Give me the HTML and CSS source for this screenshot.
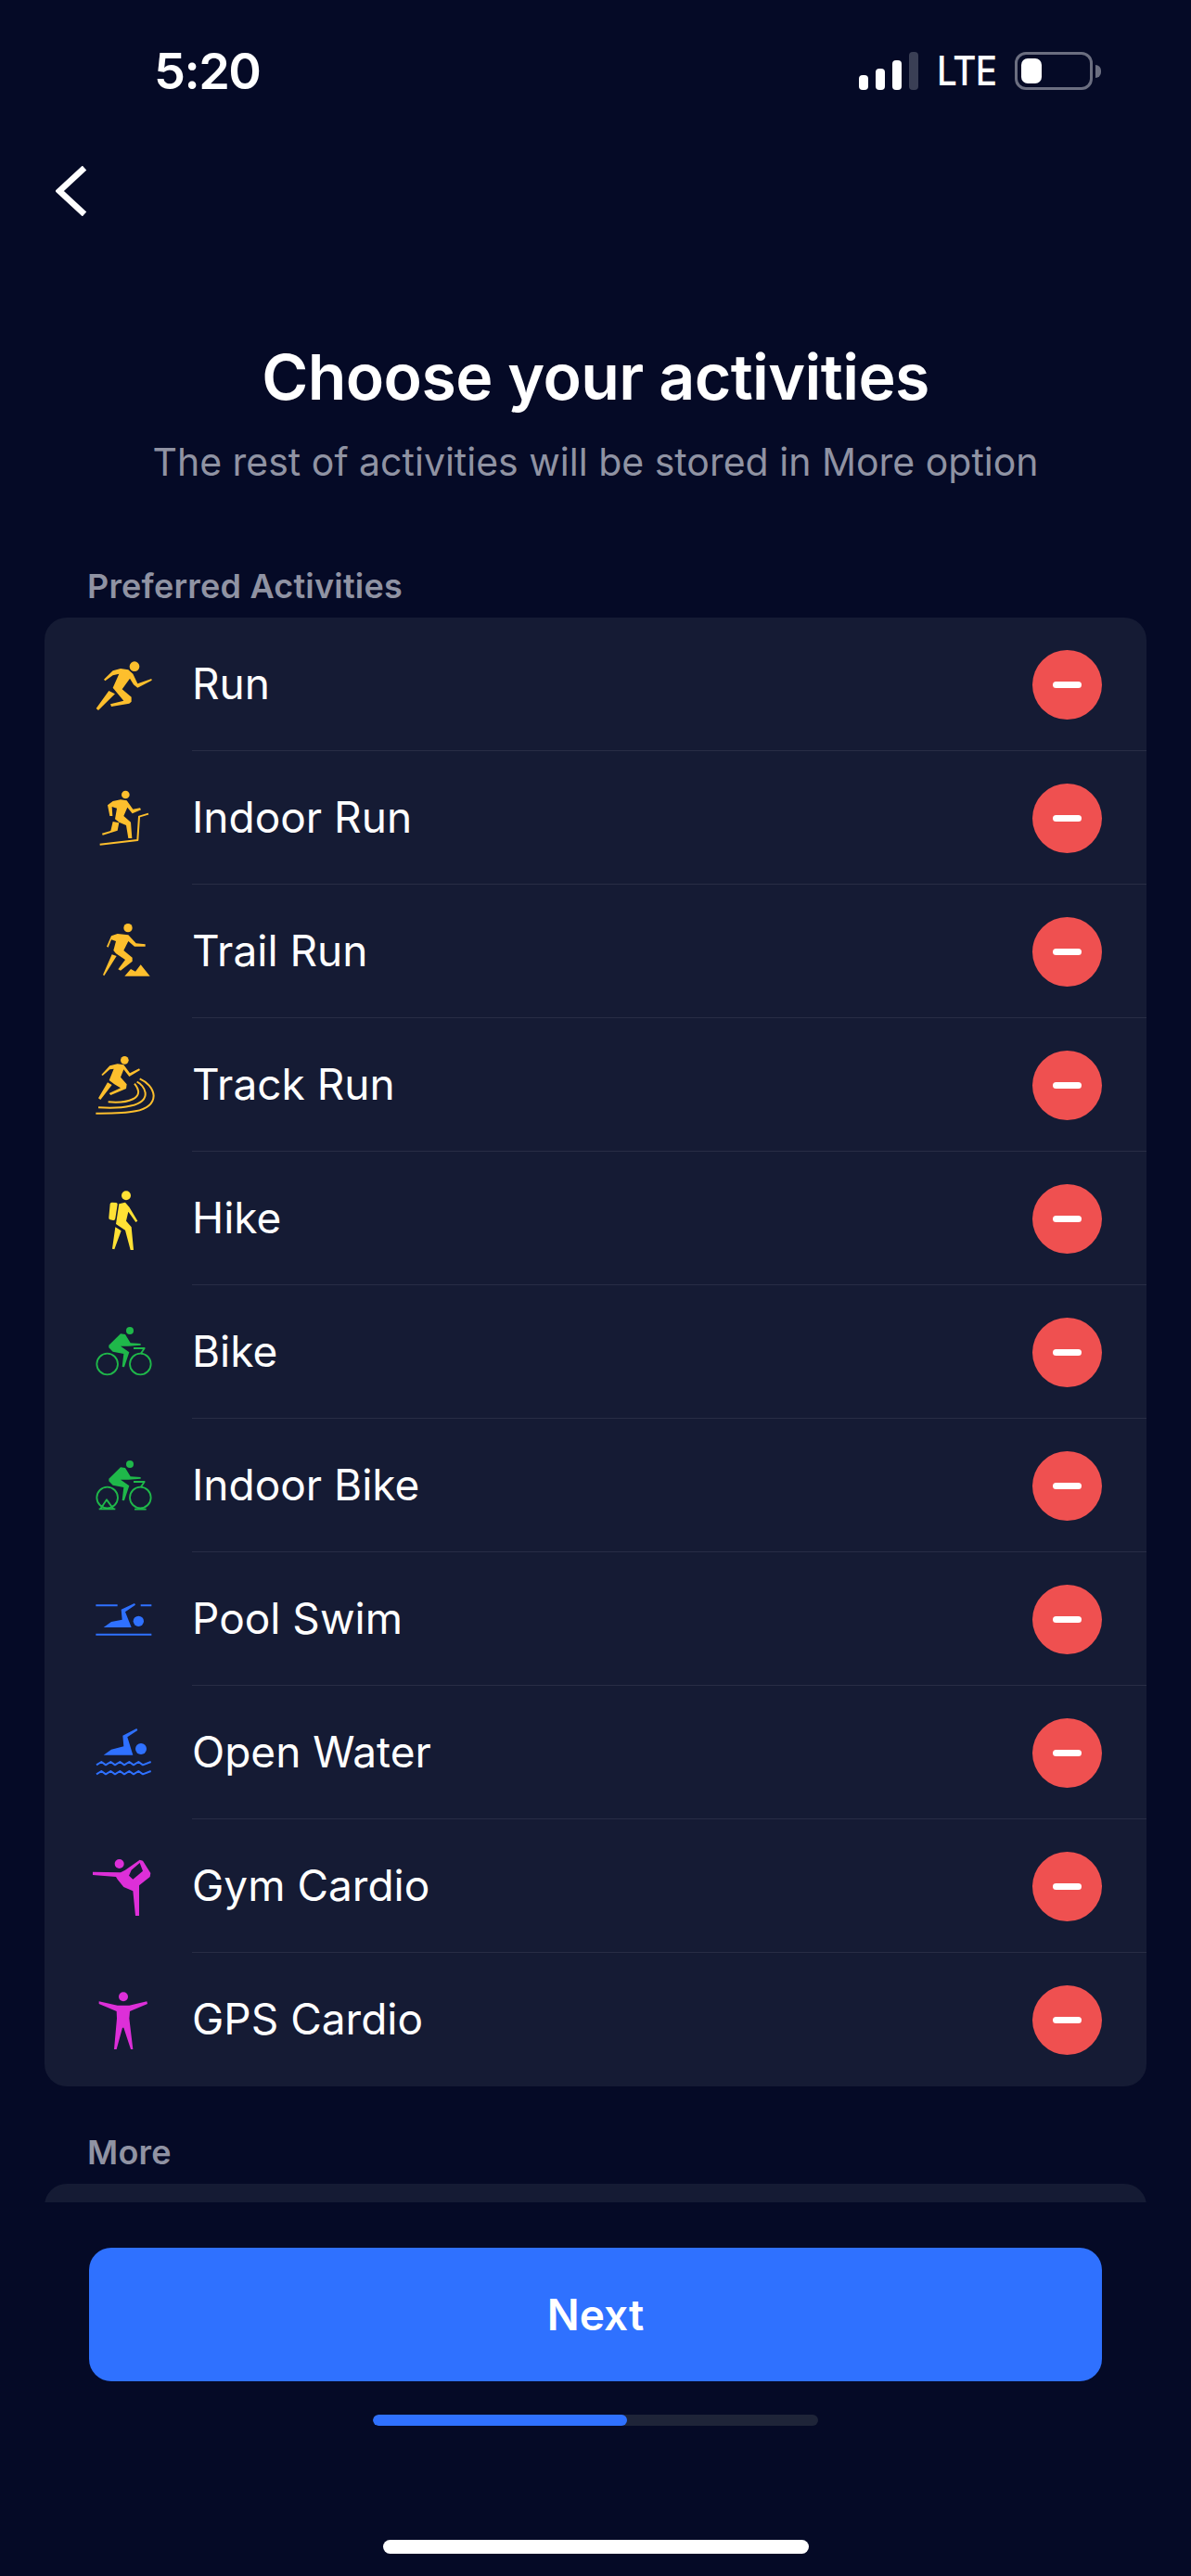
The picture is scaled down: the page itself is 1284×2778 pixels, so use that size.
FILE: index.html
```html
<!DOCTYPE html>
<html lang="en">
<head>
  <meta charset="UTF-8" />
  <meta name="viewport" content="width=device-width, initial-scale=1.0" />
  <title>Choose your activities</title>
  <link rel="stylesheet" href="styles.css">
</head>
<body>
  <div class="status-bar">
    <span class="time">5:20</span>
    <div class="status-right">
      <div class="signal">
        <i class="bar-1"></i><i class="bar-2"></i><i class="bar-3"></i><i class="bar-4"></i>
      </div>
      <span class="network">LTE</span>
      <div class="battery"><div class="battery-level"></div></div>
      <div class="battery-cap"></div>
    </div>
  </div>

  <nav class="nav">
    <svg class="back" width="34" height="54" viewBox="0 0 34 54"><path d="M31 2 L4 27 L31 52" fill="none" stroke="#fff" stroke-width="6.5"/></svg>
  </nav>

  <header class="intro">
    <h1>Choose your activities</h1>
    <p>The rest of activities will be stored in More option</p>
  </header>

  <main class="scroll">
    <h2 class="section-label">Preferred Activities</h2>
    <ul class="card">
      <li class="row">
        <svg class="icon run" viewBox="0 -72 300 432"><circle cx="195" cy="86" r="16"/><path d="M96 128 L125 100 L150 93 L175 97 L190 110 L205 142 L250 126 L251 131 L205 155 L192 145 L180 125 L155 160 L185 185 L185 200 L178 206 L120 216 L117 208 L160 197 L150 185 L125 155 L145 110 L125 115 L100 133 Z M112 165 L132 175 L78 228 L71 222 Z"/></svg>
        <span class="name">Run</span>
        <button class="remove"></button>
      </li>
      <li class="row">
        <svg class="icon run" viewBox="0 -60 300 432"><circle cx="166" cy="81" r="13"/><path d="M108 115 L125 102 L150 97 L170 100 L190 128 L213 124 L216 130 L188 142 L172 122 L160 150 L183 170 L187 222 L175 222 L168 180 L145 170 L132 160 L138 125 L122 120 L124 150 L115 150 Z M125 168 L145 172 L140 197 L92 212 L90 206 L118 198 Z"/><path class="line" d="M83 242 L205 228 L210 152 L240 143" stroke-width="6"/></svg>
        <span class="name">Indoor Run</span>
        <button class="remove"></button>
      </li>
      <li class="row">
        <svg class="icon run" viewBox="0 -78 300 432"><circle cx="174" cy="62" r="14"/><path d="M105 122 L120 88 L140 81 L175 85 L200 112 L230 115 L230 122 L195 122 L175 105 L160 135 L188 158 L188 170 L150 200 L142 196 L165 165 L135 145 L127 135 L135 105 L120 100 L110 125 Z M122 148 L137 153 L97 217 L93 214 Z M163 218 L183 195 L198 203 L215 181 L245 218 Z"/></svg>
        <span class="name">Trail Run</span>
        <button class="remove"></button>
      </li>
      <li class="row">
        <svg class="icon run" viewBox="0 -36 300 432"><circle cx="163" cy="100" r="13"/><path d="M88 147 L115 118 L140 112 L160 115 L180 142 L210 127 L213 132 L178 153 L160 130 L150 155 L170 178 L168 192 L118 213 L113 207 L150 190 L130 178 L113 165 L128 128 L115 130 L92 150 Z M108 172 L122 180 L85 228 L78 223 Z"/><path class="line" stroke-width="6" d="M110 235 C170 240 235 225 195 176 M78 253 C150 258 235 250 230 205 C228 190 215 175 203 170 M70 272 C150 272 255 275 257 215 C255 190 235 170 212 160"/></svg>
        <span class="name">Track Run</span>
        <button class="remove"></button>
      </li>
      <li class="row">
        <svg class="icon hike" viewBox="0 396 300 432"><circle cx="168" cy="538" r="15"/><path d="M145 565 L165 560 L178 575 L205 620 L199 624 L175 590 L168 620 L185 640 L192 714 L182 714 L165 650 L135 630 Z M133 640 L152 652 L130 712 L123 710 Z M122 560 L136 561 Q141 562 140 567 L133 612 Q132 619 126 618 L116 616 Q111 615 112 609 L116 565 Q117 560 122 560 Z"/></svg>
        <span class="name">Hike</span>
        <button class="remove"></button>
      </li>
      <li class="row">
        <svg class="icon bike" viewBox="0 -72 300 432"><circle cx="180" cy="75" r="12"/><path d="M112 122 L150 85 L165 87 L182 115 L215 117 L215 122 L175 125 L150 125 L178 145 L162 193 L155 192 L160 150 L125 143 L112 130 Z"/><g class="line" stroke-width="5.5"><circle cx="107" cy="183" r="34"/><circle cx="214" cy="183" r="34"/><path d="M192 132 H227 L215 150"/></g></svg>
        <span class="name">Bike</span>
        <button class="remove"></button>
      </li>
      <li class="row">
        <svg class="icon bike" viewBox="0 360 300 432"><circle cx="180" cy="507" r="12"/><path d="M112 554 L150 517 L165 519 L182 547 L215 549 L215 554 L175 557 L150 557 L178 577 L162 625 L155 624 L160 582 L125 575 L112 562 Z"/><g class="line" stroke-width="5.5"><circle cx="107" cy="615" r="34"/><circle cx="214" cy="615" r="34"/><path d="M192 564 H227 L215 582 M80 652 H133 M85 652 L105 622 L127 652 M195 653 H233"/></g></svg>
        <span class="name">Indoor Bike</span>
        <button class="remove"></button>
      </li>
      <li class="row">
        <svg class="icon swim" viewBox="0 -78 300 432"><circle cx="208" cy="145" r="17"/><path d="M95 165 L120 147 L155 140 L152 107 L195 87 L198 92 L165 115 L185 165 Z"/><path class="line" stroke-width="6" d="M70 94 H140 M215 94 H250 M70 188 H250"/></svg>
        <span class="name">Pool Swim</span>
        <button class="remove"></button>
      </li>
      <li class="row">
        <svg class="icon swim" viewBox="0 354 300 432"><circle cx="216" cy="558" r="18"/><path d="M95 578 L120 560 L160 550 L157 515 L202 492 L205 498 L172 520 L190 578 Z"/><path class="line" stroke-width="6" d="M72 610 L88 600 L102 610 L118 600 L132 610 L148 600 L162 610 L178 600 L192 610 L208 600 L222 610 L248 600 M72 640 L88 630 L102 640 L118 630 L132 640 L148 630 L162 640 L178 630 L192 640 L208 630 L222 640 L248 630"/></svg>
        <span class="name">Open Water</span>
        <button class="remove"></button>
      </li>
      <li class="row">
        <svg class="icon cardio" viewBox="0 -54 300 432"><circle cx="146" cy="90" r="15"/><path fill-rule="evenodd" d="M60 116 L150 118 L165 110 L212 77 L222 80 L247 120 L245 132 L210 160 L210 258 L198 258 L190 178 L160 165 L140 140 L135 132 L60 126 Z M212 87 L185 110 L177 128 L190 140 L222 113 Z"/></svg>
        <span class="name">Gym Cardio</span>
        <button class="remove"></button>
      </li>
      <li class="row">
        <svg class="icon cardio" viewBox="0 378 300 432"><circle cx="159" cy="520" r="15"/><path d="M80 535 L140 548 L178 548 L235 535 L237 543 L180 567 L178 590 L190 690 L183 690 L160 620 L156 620 L137 690 L129 690 L138 590 L137 567 L80 543 Z"/></svg>
        <span class="name">GPS Cardio</span>
        <button class="remove"></button>
      </li>
    </ul>

    <h2 class="section-label more">More</h2>
    <div class="card more-card"></div>
  </main>

  <footer class="footer">
    <button class="next">Next</button>
    <div class="progress"><div class="progress-fill" style="width: 57%"></div></div>
    <div class="home-indicator"></div>
  </footer>
</body>
</html>
```

FILE: styles.css
```css
:root {
  --background: #050a26;
  --card-bg: #151b34;
  --divider: #282d45;
  --muted: #9093a3;
  --primary: #2f71ff;
  --red: #ef5050;
}

* {
  box-sizing: border-box;
  margin: 0;
  padding: 0;
}

html, body {
  width: 1284px;
  height: 2778px;
  overflow: hidden;
  background-color: var(--background);
  color: #fff;
  font-family: 'Inter', 'Liberation Sans', sans-serif;
}

/* status bar */
.status-bar {
  display: flex;
  justify-content: space-between;
  align-items: flex-end;
  height: 97px;
  padding: 0 97px 0 166px;
}

.time {
  font-size: 54px;
  line-height: 40px;
  font-weight: 600;
  letter-spacing: -1.5px;
}

.status-right {
  display: flex;
  align-items: flex-end;
}

.signal {
  display: flex;
  align-items: flex-end;
  gap: 8px;
  margin-right: 20px;
}

.signal i {
  display: block;
  width: 10px;
  background-color: #fff;
  border-radius: 4px;
}

.signal .bar-1 { height: 16px; }
.signal .bar-2 { height: 23px; }
.signal .bar-3 { height: 32px; }
.signal .bar-4 { height: 41px; background-color: #3a3f55; }

.network {
  width: 62px;
  margin-right: 22px;
  font-size: 44px;
  line-height: 41px;
  font-weight: 500;
  letter-spacing: -1px;
  white-space: nowrap;
  transform: scaleX(0.88);
  transform-origin: left center;
}

.battery {
  width: 84px;
  height: 41px;
  padding: 4px;
  border: 3px solid #6b6e80;
  border-radius: 12px;
}

.battery-level {
  width: 22px;
  height: 100%;
  background-color: #fff;
  border-radius: 7px;
}

.battery-cap {
  width: 6px;
  height: 14px;
  margin: 0 0 13px 3px;
  background-color: #6b6e80;
  border-radius: 0 7px 7px 0;
}

/* nav */
.nav {
  height: 269px;
  padding: 82px 0 0 60px;
}

.back {
  display: block;
}

/* intro */
.intro {
  text-align: center;
  height: 244px;
}

.intro h1 {
  font-size: 68px;
  line-height: 80px;
  font-weight: 600;
  letter-spacing: -0.6px;
}

.intro p {
  margin-top: 30px;
  font-size: 41px;
  line-height: 44px;
  color: var(--muted);
}

/* list */
.scroll {
  height: 1765px;
  padding: 0 48px;
  overflow: hidden;
}

.section-label {
  padding-left: 46px;
  margin-bottom: 12px;
  font-size: 36px;
  line-height: 44px;
  font-weight: 600;
  letter-spacing: 0.2px;
  color: var(--muted);
}

.section-label.more {
  margin-top: 49px;
}

.card {
  background-color: var(--card-bg);
  border-radius: 24px;
  list-style: none;
}

.more-card {
  height: 100px;
}

.row {
  display: flex;
  align-items: center;
  height: 144px;
  padding-right: 48px;
  position: relative;
}

.row + .row::before {
  content: "";
  position: absolute;
  top: -1px;
  left: 159px;
  right: 0;
  height: 1px;
  background-color: var(--divider);
}

.icon {
  flex: none;
  width: 100px;
  height: 144px;
  margin-left: 32px;
  margin-right: 27px;
}

.line {
  fill: none;
  stroke-linejoin: round;
}

.run { fill: #fdbf2d; }
.run .line { stroke: #fdbf2d; }
.hike { fill: #ffe135; }
.bike { fill: #1fb84a; }
.bike .line { stroke: #1fb84a; }
.swim { fill: #2f71ff; }
.swim .line { stroke: #2f71ff; }
.cardio { fill: #dd2fd8; }

.name {
  flex: 1;
  padding-bottom: 2px;
  font-size: 46px;
  line-height: 60px;
}

.remove {
  width: 75px;
  height: 75px;
  border: none;
  border-radius: 50%;
  background-color: var(--red);
  position: relative;
}

.remove::after {
  content: "";
  position: absolute;
  top: 34px;
  left: 22px;
  width: 31px;
  height: 7px;
  background-color: #fff;
  border-radius: 4px;
}

/* footer */
.footer {
  display: flex;
  flex-direction: column;
  align-items: center;
  padding-top: 49px;
}

.next {
  width: 1092px;
  height: 144px;
  border: none;
  border-radius: 24px;
  background-color: var(--primary);
  color: #fff;
  font-family: inherit;
  font-size: 46px;
  font-weight: 600;
}

.progress {
  width: 480px;
  height: 12px;
  margin-top: 36px;
  background-color: #1e2438;
  border-radius: 6px;
  overflow: hidden;
}

.progress-fill {
  height: 100%;
  background-color: var(--primary);
  border-radius: 6px;
}

.home-indicator {
  width: 459px;
  height: 15px;
  margin-top: 123px;
  background-color: #fff;
  border-radius: 8px;
}
```
